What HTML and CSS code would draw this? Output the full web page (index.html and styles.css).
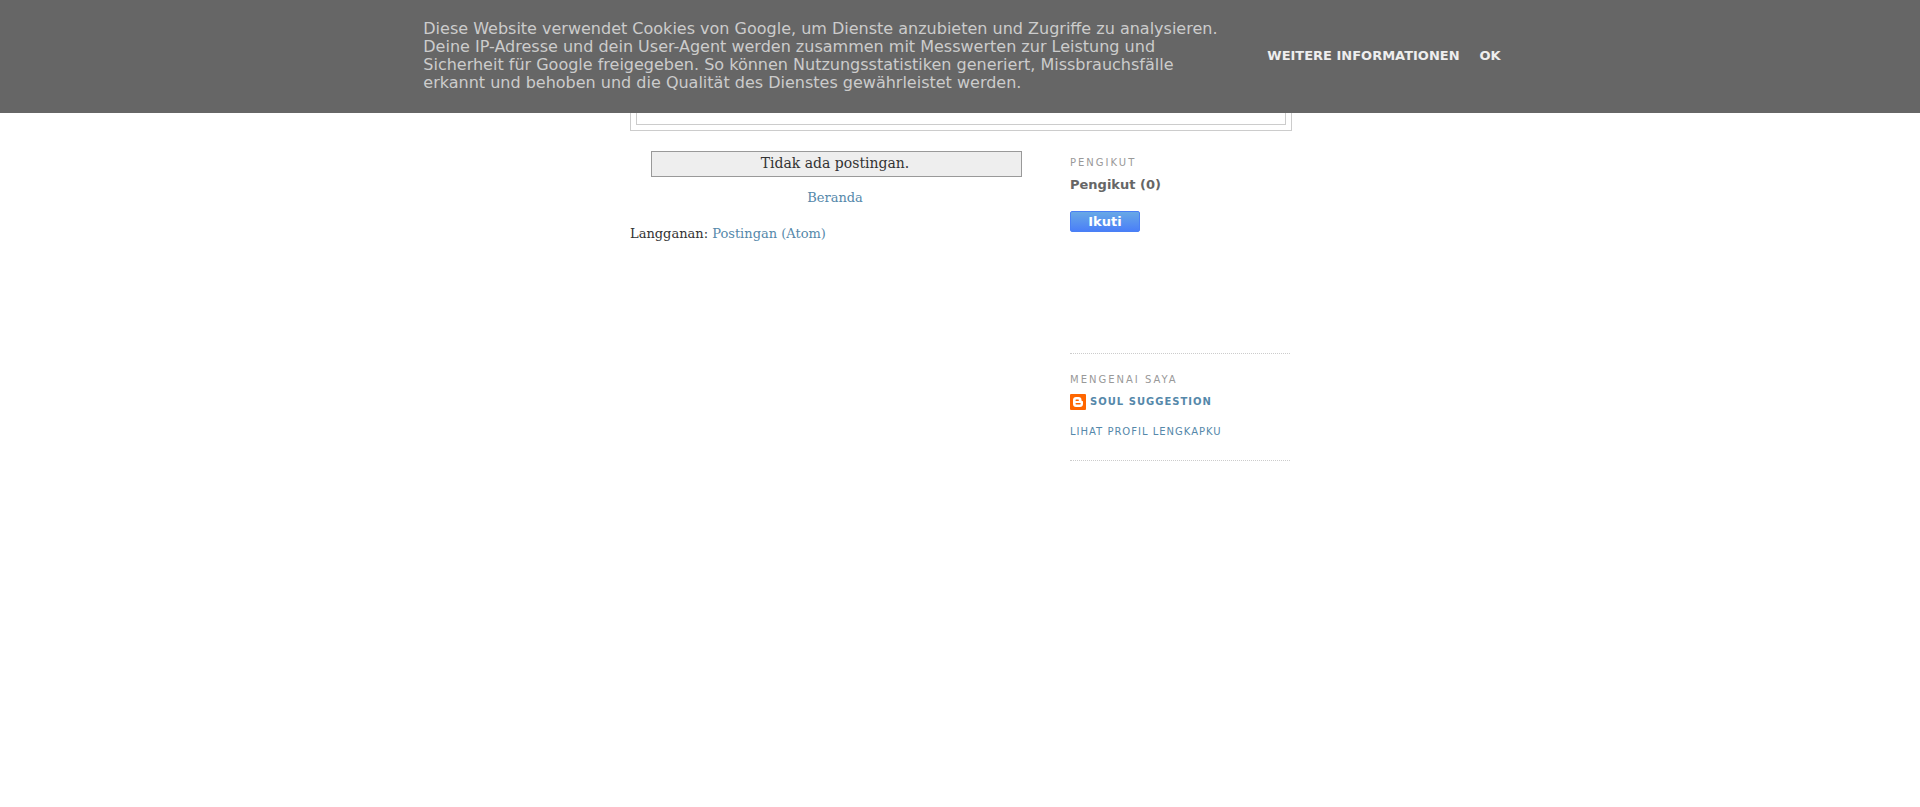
FILE: index.html
```html
<!DOCTYPE html>
<html lang="id">
<head>
    <meta charset="UTF-8">
    <meta name="viewport" content="width=device-width, initial-scale=1.0">
    <title>Soul Suggestion</title>
    <link rel="stylesheet" href="styles.css">
</head>
<body>
    <div class="cookie-bar" lang="de">
        <p class="cookie-text">Diese Website verwendet Cookies von Google, um Dienste anzubieten und Zugriffe zu analysieren. Deine IP-Adresse und dein User-Agent werden zusammen mit Messwerten zur Leistung und Sicherheit für Google freigegeben. So können Nutzungsstatistiken generiert, Missbrauchsfälle erkannt und behoben und die Qualität des Dienstes gewährleistet werden.</p>
        <div class="cookie-buttons">
            <a href="#">Weitere Informationen</a>
            <a href="#">OK</a>
        </div>
    </div>

    <div class="outer-wrapper">
        <header class="header-wrapper">
            <div class="header"></div>
        </header>

        <div class="content-wrapper">
            <main class="main">
                <div class="status-msg">Tidak ada postingan.</div>
                <div class="blog-pager"><a href="#">Beranda</a></div>
                <div class="blog-feeds">Langganan: <a href="#">Postingan (Atom)</a></div>
            </main>

            <aside class="sidebar">
                <section class="widget followers">
                    <h2>Pengikut</h2>
                    <div class="followers-count">Pengikut (0)</div>
                    <button type="button" class="follow-button">Ikuti</button>
                </section>
                <section class="widget profile">
                    <h2>Mengenai Saya</h2>
                    <a class="profile-name" href="#">
                        <svg width="16" height="16" viewBox="0 0 16 16" aria-hidden="true">
                            <rect width="16" height="16" rx="1" fill="#ff6600"/>
                            <path fill="#fff" d="M6 3h2.500C10.500 3 11.500 4.300 11.500 6c0 .8.300 1 .8 1 .5 0 .7.300.7.800V10c0 1.800-1.200 3-3 3H6c-1.800 0-3-1.200-3-3V6c0-1.800 1.200-3 3-3z"/>
                            <path stroke="#ff6600" stroke-width="1.500" stroke-linecap="round" d="M6.200 6.200h2M6.200 9.800h3.800"/>
                        </svg>
                        Soul Suggestion
                    </a>
                    <a class="profile-link" href="#">Lihat profil lengkapku</a>
                </section>
            </aside>
        </div>
    </div>
</body>
</html>
```

FILE: styles.css
```css
body {
    margin: 0;
    background: #fff;
    color: #333;
    font-family: "DejaVu Serif", serif;
    font-size: 13px;
    line-height: 18px;
}

a {
    color: #5588aa;
    text-decoration: none;
}

/* Cookie notice, stays over the page */
.cookie-bar {
    position: fixed;
    top: 0;
    left: 0;
    right: 0;
    z-index: 10;
    display: flex;
    justify-content: center;
    align-items: center;
    gap: 44px;
    padding: 20px 0 21px 4px;
    background: #666;
    font-family: "DejaVu Sans", sans-serif;
}

.cookie-text {
    max-width: 800px;
    margin: 0;
    color: #ccc;
    font-size: 16px;
    line-height: 18px;
}

.cookie-buttons {
    display: flex;
    gap: 20px;
    font-weight: bold;
    text-transform: uppercase;
}

.cookie-buttons a {
    color: #eee;
}

/* Page */
.outer-wrapper {
    max-width: 660px;
    margin: 0 auto;
    padding-top: 10px;
}

.header-wrapper {
    width: calc(100% - 10px);
    margin-bottom: 20px;
    padding: 5px;
    border: 1px solid #ccc;
}

.header {
    height: 107px;
    border: 1px solid #ccc;
}

.content-wrapper {
    display: flex;
    justify-content: space-between;
    gap: 30px;
}

.main {
    flex: 1;
}

.status-msg {
    margin: 0 18px 12px 21px;
    padding: 2px 3px 4px 0;
    border: 1px solid #999;
    background: #eee;
    font-size: 14px;
    text-align: center;
}

.blog-pager {
    margin-bottom: 18px;
    text-align: center;
}

/* Sidebar */
.sidebar {
    width: 220px;
    font-family: "DejaVu Sans", sans-serif;
}

.widget {
    margin-bottom: 14px;
    padding-top: 5px;
    border-bottom: 1px dotted #ccc;
}

.widget h2 {
    margin: 0 0 6px;
    color: #999;
    font-size: 10px;
    font-weight: normal;
    line-height: 14px;
    letter-spacing: 2px;
    text-transform: uppercase;
}

.followers {
    min-height: 197px;
}

.followers-count {
    margin-bottom: 17px;
    color: #666;
    font-weight: bold;
}

.follow-button {
    display: block;
    width: 70px;
    height: 21px;
    padding: 0;
    border: 1px solid #4a80f5;
    border-radius: 2px;
    background: linear-gradient(#68a8e6, #4a7ff8);
    color: #fff;
    font: bold 13px "DejaVu Sans", sans-serif;
    cursor: pointer;
}

.profile {
    padding-bottom: 19px;
    font-size: 10px;
    text-transform: uppercase;
}

.profile-name {
    display: flex;
    align-items: center;
    gap: 4px;
    margin-bottom: 12px;
    font-weight: bold;
    letter-spacing: 1px;
}

.profile-link {
    display: block;
    letter-spacing: 1px;
}
```
